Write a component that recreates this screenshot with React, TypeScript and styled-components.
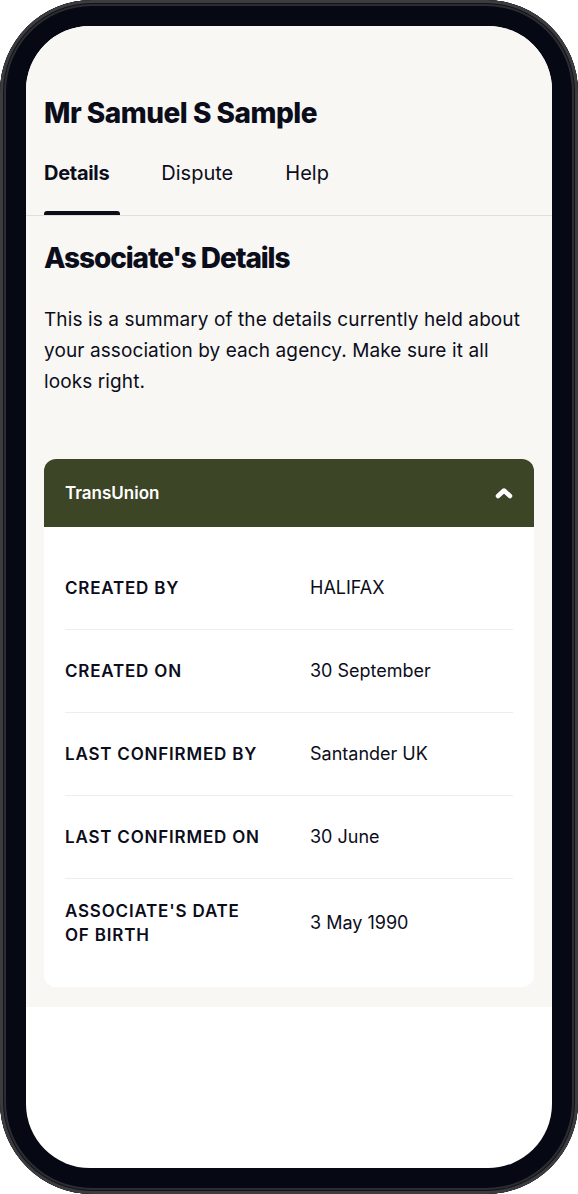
import React from "react";
import styled, { createGlobalStyle } from "styled-components";

const GlobalStyle = createGlobalStyle`
  html, body {
    margin: 0;
    padding: 0;
    background: #ffffff;
  }
  body {
    font-family: Inter, "Noto Sans", sans-serif;
    color: #0c0d1a;
    -webkit-font-smoothing: antialiased;
  }
`;

const Phone = styled.div`
  box-sizing: border-box;
  width: 578px;
  height: 1194px;
  padding: 26px;
  border-radius: 92px;
  background: #060814;
  box-shadow:
    inset 0 0 0 3px #3b3b40,
    inset 0 0 0 4px #111216,
    inset 0 0 0 6px #2c2d33;
`;

const Screen = styled.div`
  height: 100%;
  border-radius: 64px;
  overflow: hidden;
  background: #ffffff;
`;

const Page = styled.div`
  background: #f8f7f4;
  padding-bottom: 20px;
`;

const Header = styled.header`
  padding: 70px 18px 0;
  border-bottom: 1px solid #e2dfda;
`;

const Name = styled.h1`
  margin: 0;
  font-size: 28px;
  line-height: 34px;
  font-weight: 800;
  letter-spacing: -0.5px;
`;

const Tabs = styled.nav`
  display: flex;
  gap: 52px;
  margin-top: 31px;
`;

const Tab = styled.div<{ $active?: boolean }>`
  position: relative;
  padding-bottom: 30px;
  font-size: 20px;
  line-height: 24px;
  font-weight: ${(p) => (p.$active ? 700 : 400)};
  letter-spacing: ${(p) => (p.$active ? "-0.3px" : "0")};

  &::after {
    content: "";
    display: ${(p) => (p.$active ? "block" : "none")};
    position: absolute;
    left: 0;
    bottom: 0;
    width: 76px;
    height: 4px;
    border-radius: 3px 3px 0 0;
    background: #0c0d1a;
  }
`;

const Content = styled.section`
  padding: 25px 18px 0;
`;

const Title = styled.h2`
  margin: 0;
  font-size: 28px;
  line-height: 34px;
  font-weight: 800;
  letter-spacing: -1.1px;
`;

const Intro = styled.p`
  margin: 29px 0 0;
  font-size: 19px;
  line-height: 31px;
  font-weight: 400;
  letter-spacing: 0.1px;
`;

const Card = styled.div`
  margin-top: 62px;
  border-radius: 12px;
  overflow: hidden;
  background: #ffffff;
`;

const CardHeader = styled.div`
  display: flex;
  align-items: center;
  justify-content: space-between;
  height: 68px;
  padding: 0 21px;
  background: #3c4526;
  color: #ffffff;
  font-size: 17px;
  font-weight: 600;
`;

const CardBody = styled.div`
  padding: 20px 21px;
`;

const Row = styled.div`
  display: grid;
  grid-template-columns: 197px 1fr;
  column-gap: 48px;
  align-items: center;
  box-sizing: border-box;
  min-height: 83px;
  padding: 20px 0;
  border-bottom: 1px solid #f1ece7;

  &:last-child {
    border-bottom: none;
    min-height: 88px;
  }
`;

const Label = styled.div`
  font-size: 17px;
  line-height: 24px;
  font-weight: 600;
  letter-spacing: 0.8px;
  text-transform: uppercase;
`;

const Value = styled.div`
  font-size: 18px;
  line-height: 24px;
  font-weight: 400;
`;

const Chevron = () => (
  <svg width="18" height="12" viewBox="0 0 18 12" aria-hidden="true">
    <polyline
      points="3,9 9,3.5 15,9"
      fill="none"
      stroke="#ffffff"
      strokeWidth="4.5"
      strokeLinecap="round"
      strokeLinejoin="round"
    />
  </svg>
);

const details = [
  { label: "Created by", value: "HALIFAX" },
  { label: "Created on", value: "30 September" },
  { label: "Last confirmed by", value: "Santander UK" },
  { label: "Last confirmed on", value: "30 June" },
  { label: "Associate's date of birth", value: "3 May 1990" },
];

export default function App() {
  return (
    <>
      <GlobalStyle />
      <Phone>
        <Screen>
          <Page>
            <Header>
              <Name>Mr Samuel S Sample</Name>
              <Tabs>
                <Tab $active>Details</Tab>
                <Tab>Dispute</Tab>
                <Tab>Help</Tab>
              </Tabs>
            </Header>
            <Content>
              <Title>Associate's Details</Title>
              <Intro>
                This is a summary of the details currently held about your
                association by each agency. Make sure it all looks right.
              </Intro>
              <Card>
                <CardHeader>
                  <span>TransUnion</span>
                  <Chevron />
                </CardHeader>
                <CardBody>
                  {details.map((d) => (
                    <Row key={d.label}>
                      <Label>{d.label}</Label>
                      <Value>{d.value}</Value>
                    </Row>
                  ))}
                </CardBody>
              </Card>
            </Content>
          </Page>
        </Screen>
      </Phone>
    </>
  );
}
